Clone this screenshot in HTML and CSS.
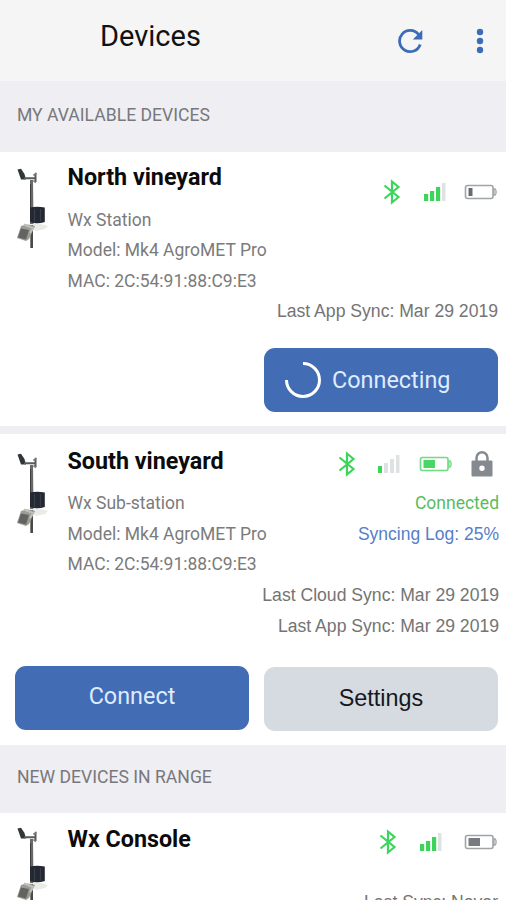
FILE: index.html
```
<!DOCTYPE html>
<html lang="en">
<head>
<meta charset="utf-8">
<title>Devices</title>
<link rel="stylesheet" href="styles.css">
</head>
<body>
<svg class="defs" aria-hidden="true">
  <defs>
    <symbol id="station" viewBox="0 0 34 84">
      <path d="M13 12 16 12 16.500 56 13 56z" fill="#686a67"/>
      <path d="M13.500 16V52" stroke="#3d403e" stroke-width="1"/>
      <path d="M.5 1.500 4 .8 7.500 6 9 11.500H4z" fill="#30373a"/>
      <path d="M7 10.200H19M18.500 6V14" stroke="#565c5b" stroke-width="2" fill="none"/>
      <path d="M16.500 7.500 19.500 5M16.500 12.500 19 14.500" stroke="#777b7a" stroke-width="1.800"/>
      <path d="M12 57 20 55 31 58 28 61 19 63z" fill="#e9ebe7"/>
      <path d="M13 39.500Q20 38 27.800 39.500V54Q20 56.500 13 54z" fill="#242832"/>
      <path d="M17.500 41V54M23.500 41V54" stroke="#393e4a" stroke-width="1.200"/>
      <path d="M13.300 57H16V80H13.300z" fill="#484a47"/>
      <path d="M4 58Q10 55 18 58L12 71 9 73 0 70z" fill="#9b9c95"/>
      <path d="M4 60.500 12 62 9 71.500 1 69.500z" fill="#62655f"/>
      <path d="M7 56.500 16 60 13 65" fill="none" stroke="#bfc0bb" stroke-width="2"/>
    </symbol>
    <symbol id="bluetooth" viewBox="0 0 18 26">
      <path d="M1.500 6.500 15.500 18 9 23.500V2.500L15.500 8 1.500 19.500" fill="none" stroke="#3bd55a" stroke-width="2.200"/>
    </symbol>
    <symbol id="signal-3" viewBox="0 0 24 20">
      <path d="M1 12H5.200V19H1zM7 9H11.200V19H7zM13 5H17.200V19H13z" fill="#3ed45b"/>
      <path d="M19 1H22.500V19H19z" fill="#dfe2e2"/>
    </symbol>
    <symbol id="signal-1" viewBox="0 0 24 20">
      <path d="M1 12H5V19H1z" fill="#3ed45b"/>
      <path d="M7 9H11V19H7zM13 5H17V19H13zM19 1H22.500V19H19z" fill="#dfe2e2"/>
    </symbol>
    <symbol id="battery" viewBox="0 0 34 16">
      <rect x="1.500" y="1.500" width="27.500" height="13" rx="2" fill="none" stroke="currentColor" stroke-width="1.600"/>
      <path d="M30 5H31L32 6.500V9.500L31 11H30z" fill="none" stroke="currentColor" stroke-width="1.300"/>
    </symbol>
  </defs>
</svg>

<header class="topbar">
  <h1 class="topbar-title">Devices</h1>
  <svg class="refresh" viewBox="0 0 26 26">
    <path d="M21.500 6.500A10.600 10.600 0 1 0 23.200 16.500" fill="none" stroke="#3c6bb8" stroke-width="2.800"/>
    <path d="M25.300 2V11.500H15.800z" fill="#3c6bb8"/>
  </svg>
  <svg class="more" viewBox="0 0 8 26">
    <circle cx="4" cy="4" r="3.200"/><circle cx="4" cy="13" r="3.200"/><circle cx="4" cy="22" r="3.200"/>
  </svg>
</header>

<h2 class="section section-available">MY AVAILABLE DEVICES</h2>

<article class="card card-north">
  <div class="summary">
    <svg class="thumb"><use href="#station"/></svg>
    <div class="info">
      <h3 class="name">North vineyard</h3>
      <p class="line">Wx Station</p>
      <p class="line">Model: Mk4 AgroMET Pro</p>
      <p class="line">MAC: 2C:54:91:88:C9:E3</p>
    </div>
    <div class="status">
      <div class="icons">
        <svg class="bt"><use href="#bluetooth"/></svg>
        <svg class="signal"><use href="#signal-3"/></svg>
        <svg class="battery gray" viewBox="0 0 34 16"><use href="#battery"/><path d="M4.500 4H8.500V12H4.500z" fill="#666b70"/></svg>
      </div>
    </div>
  </div>
  <p class="sync">Last App Sync: Mar 29 2019</p>
  <div class="actions">
    <button class="btn primary connecting">
      <svg class="spinner" viewBox="0 0 38 38"><path d="M19 2.500A16.500 16.500 0 1 1 2.500 19" fill="none" stroke="#fff" stroke-width="3"/></svg>
      <span>Connecting</span>
    </button>
  </div>
</article>

<article class="card card-south">
  <div class="summary">
    <svg class="thumb"><use href="#station"/></svg>
    <div class="info">
      <h3 class="name">South vineyard</h3>
      <p class="line">Wx Sub-station</p>
      <p class="line">Model: Mk4 AgroMET Pro</p>
      <p class="line">MAC: 2C:54:91:88:C9:E3</p>
    </div>
    <div class="status">
      <div class="icons">
        <svg class="bt"><use href="#bluetooth"/></svg>
        <svg class="signal"><use href="#signal-1"/></svg>
        <svg class="battery green" viewBox="0 0 34 16"><use href="#battery"/><path d="M4.500 4H16V12H4.500z" fill="#4bd765"/></svg>
        <svg class="lock" viewBox="0 0 22 28">
          <path d="M5.500 12V8A5.500 5.800 0 0 1 16.500 8V12" fill="none" stroke="#858990" stroke-width="2.500"/>
          <path fill-rule="evenodd" d="M1.500 10.500H20.500Q21.500 10.500 21.500 11.500V25.500Q21.500 26.500 20.500 26.500H1.500Q.5 26.500 .5 25.500V11.500Q.5 10.500 1.500 10.500zM11 15.500A2.600 2.600 0 1 0 11 20.900 2.600 2.600 0 1 0 11 15.500z" fill="#858990"/>
        </svg>
      </div>
      <p class="line connected">Connected</p>
      <p class="line syncing">Syncing Log: 25%</p>
    </div>
  </div>
  <p class="sync">Last Cloud Sync: Mar 29 2019</p>
  <p class="sync">Last App Sync: Mar 29 2019</p>
  <div class="actions">
    <button class="btn primary connect">Connect</button>
    <button class="btn secondary">Settings</button>
  </div>
</article>

<h2 class="section section-new">NEW DEVICES IN RANGE</h2>

<article class="card card-console">
  <div class="summary">
    <svg class="thumb"><use href="#station"/></svg>
    <div class="info">
      <h3 class="name">Wx Console</h3>
    </div>
    <div class="status">
      <div class="icons">
        <svg class="bt"><use href="#bluetooth"/></svg>
        <svg class="signal"><use href="#signal-3"/></svg>
        <svg class="battery gray" viewBox="0 0 34 16"><use href="#battery"/><path d="M4.500 4H16V12H4.500z" fill="#777b80"/></svg>
      </div>
      <p class="sync never">Last Sync: Never</p>
    </div>
  </div>
</article>
</body>
</html>
```

FILE: styles.css
```
* { box-sizing: border-box; }
html { height: 900px; overflow: hidden; }
body {
  margin: 0;
  width: 506px;
  height: 900px;
  overflow: hidden;
  background: #fff;
  font-family: Roboto, "Liberation Sans", sans-serif;
}
h1, h2, h3, p { margin: 0; font-weight: 400; }
svg { display: block; flex: none; }
.defs { display: none; }

.topbar {
  display: flex;
  align-items: center;
  height: 81px;
  padding: 0 22px 0 100px;
  background: #f5f5f5;
}
.topbar-title {
  margin: 0 auto 10px 0;
  font-size: 29px;
  line-height: 36px;
  color: #111;
  white-space: nowrap;
}
.refresh { width: 26px; height: 26px; margin-right: 53px; }
.more { width: 8px; height: 26px; fill: #3c6bb8; }

.section {
  display: flex;
  align-items: center;
  padding: 0 17px;
  background: #eeeef3;
  font-size: 17.600px;
  color: #78787c;
}
.section-available { height: 71px; padding-bottom: 3px; }
.section-new { height: 68px; padding-bottom: 4px; }

.card { padding: 10px 8px 0 17px; background: #fff; }
.card-north { height: 274px; }
.card-south { height: 319px; border-top: 8px solid #eeeef3; padding: 11px 7px 0 17px; }
.card-console { height: 87px; overflow: hidden; }

.summary { display: flex; align-items: flex-start; }
.thumb { width: 34px; height: 84px; margin: 6px 16.500px 0 0; }
.card-south .thumb { margin-top: 8px; }
.card-console .thumb { margin-top: 4px; }
.info { flex: 1; min-width: 0; }
.name {
  height: 43px;
  padding-top: 1px;
  font-size: 23.300px;
  line-height: 31px;
  font-weight: 700;
  color: #0b0b0b;
  white-space: nowrap;
}
.card-north .name { height: 42.500px; padding-top: 0; }
.line {
  font-size: 17.500px;
  line-height: 30.500px;
  color: #7b7b7b;
  white-space: nowrap;
}
.status { text-align: right; }
.icons { display: flex; align-items: center; justify-content: flex-end; height: 43px; }
.card-north .icons { margin-top: 8px; }
.card-south .icons, .card-console .icons { padding-bottom: 6px; }
.bt { width: 18px; height: 26px; margin-right: 22px; }
.signal { width: 24px; height: 20px; margin-right: 17px; }
.battery { width: 34px; height: 16px; }
.card-south .bt { margin-right: 21px; }
.card-south .signal { margin-right: 18px; }
.card-console .signal { margin-right: 21px; }
.gray { color: #a0a4a6; }
.green { color: #6bdc80; margin-right: 18px; }
.lock { width: 22px; height: 28px; margin-right: 6px; }
.connected { color: #57bd60; }
.syncing { font-family: "Liberation Sans", sans-serif; color: #5580c8; }
.sync {
  font-family: "Liberation Sans", sans-serif;
  font-size: 17.600px;
  line-height: 30.700px;
  text-align: right;
  color: #747474;
  white-space: nowrap;
}
.sync + .sync { line-height: 32px; }
.never { margin-top: 21px; }

.actions { display: flex; justify-content: flex-end; gap: 15px; margin: 21.500px 0 0 -2px; }
.card-south .actions { margin: 23.700px 1px 0 -2px; }
.btn {
  display: flex;
  align-items: center;
  justify-content: center;
  width: 234px;
  height: 64px;
  padding: 0;
  border: 0;
  border-radius: 11px;
  font-family: Roboto, sans-serif;
  font-size: 23.400px;
}
.primary { background: #426cb4; color: #dfebff; }
.connect { padding-bottom: 4px; }
.connecting { justify-content: flex-start; padding: 0 0 1px 20px; }
.spinner { width: 38px; height: 38px; margin-right: 10px; }
.secondary {
  margin-top: 1px;
  background: #d6dbe1;
  color: #15181c;
  font-family: "Liberation Sans", sans-serif;
}
```
